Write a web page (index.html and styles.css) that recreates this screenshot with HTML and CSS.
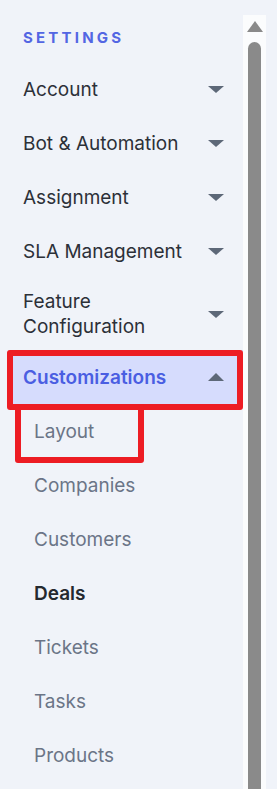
FILE: index.html
```html
<!DOCTYPE html>
<html lang="en">
<head>
    <meta charset="UTF-8">
    <meta name="viewport" content="width=device-width, initial-scale=1.0">
    <title>Settings</title>
    <link rel="stylesheet" href="styles.css">
</head>
<body>
    <div class="page">
        <aside class="sidebar">
            <div class="titre">SETTINGS</div>
            <nav class="menu">
                <div class="item"><span>Account</span><i class="chevron"></i></div>
                <div class="item"><span>Bot &amp; Automation</span><i class="chevron"></i></div>
                <div class="item"><span>Assignment</span><i class="chevron"></i></div>
                <div class="item"><span>SLA Management</span><i class="chevron"></i></div>
                <div class="item"><span>Feature<br>Configuration</span><i class="chevron"></i></div>
                <div class="item actif marque"><span>Customizations</span><i class="chevron haut"></i></div>
                <div class="sous marque-petit">Layout</div>
                <div class="sous">Companies</div>
                <div class="sous">Customers</div>
                <div class="sous courant">Deals</div>
                <div class="sous">Tickets</div>
                <div class="sous">Tasks</div>
                <div class="sous">Products</div>
            </nav>
        </aside>
        <div class="barre">
            <div class="fleche"></div>
            <div class="pouce"></div>
        </div>
    </div>
</body>
</html>
```

FILE: styles.css
```css
/* Fond clair */
html, body {
    margin: 0;
    padding: 0;
    height: 789px;
    overflow: hidden;
}

body {
    background-color: #f0f3f9;
    font-family: Inter, "Noto Sans", sans-serif;
    color: #2c3038;
}

.page {
    display: flex;
    height: 789px;
}

.sidebar {
    width: 243px;
    flex-shrink: 0;
}

.titre {
    padding: 28px 0 14px 23px;
    font-size: 15px;
    line-height: 20px;
    font-weight: 700;
    letter-spacing: 3.2px;
    color: #5366e3;
}

.item, .sous {
    position: relative;
    display: flex;
    align-items: center;
    justify-content: space-between;
    min-height: 54px;
    box-sizing: border-box;
    padding: 11px 19px 11px 15px;
    margin-left: 8px;
    font-size: 19px;
    line-height: 25px;
}

.sous {
    padding-left: 26px;
    color: #6b7587;
}

.sous.courant {
    color: #24292f;
    font-weight: 600;
}

.item.actif {
    background-color: #d6dcfd;
    color: #4a5ee2;
    font-weight: 600;
}

.chevron {
    width: 0;
    height: 0;
    border-left: 8px solid transparent;
    border-right: 8px solid transparent;
    border-top: 7px solid #5d6878;
}

.chevron.haut {
    border-top: 0;
    border-bottom: 8px solid #5d6878;
}

/* Cadres rouges d'annotation */
.marque::after, .marque-petit::after {
    content: '';
    position: absolute;
    border: 6px solid #ed1c24;
    border-radius: 3px;
}

.marque::after {
    top: 0;
    left: -1px;
    right: 0;
    bottom: -6px;
}

.marque-petit::after {
    top: 0;
    left: 7px;
    width: 117px;
    bottom: -5px;
}

/* Barre de défilement */
.barre {
    width: 23px;
    margin-top: 15px;
    padding-top: 6px;
    background-color: #fbfcfd;
    display: flex;
    flex-direction: column;
    align-items: center;
    gap: 10px;
}

.fleche {
    width: 0;
    height: 0;
    border-left: 8px solid transparent;
    border-right: 8px solid transparent;
    border-bottom: 11px solid #8a8a8a;
}

.pouce {
    flex: 1;
    width: 13px;
    background-color: #8a8a8a;
    border-radius: 7px 7px 0 0;
}
```
